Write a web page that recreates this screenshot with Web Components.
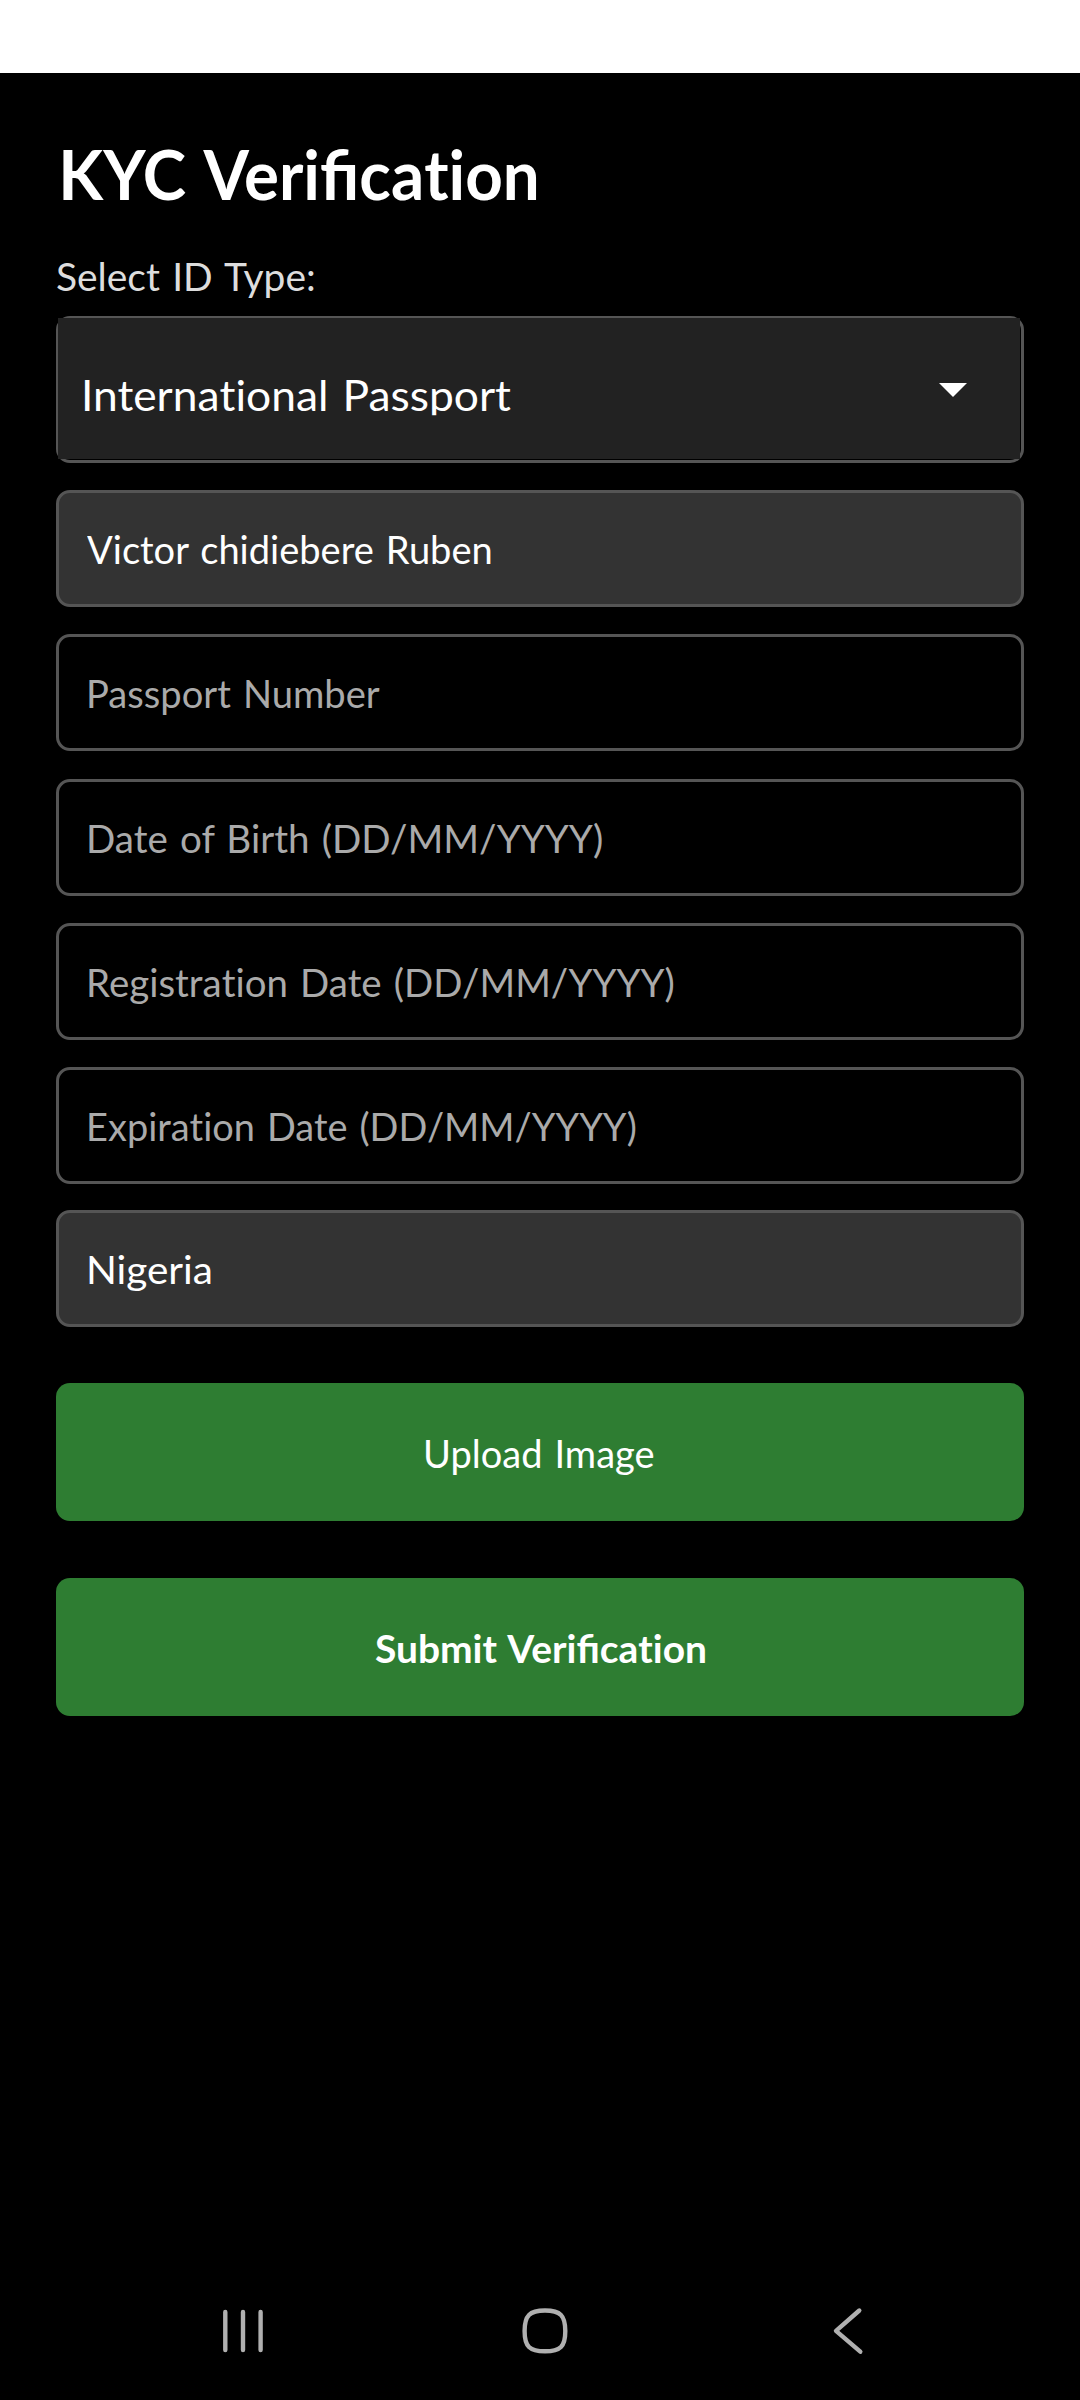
<!DOCTYPE html>
<html lang="en">
<head>
<meta charset="utf-8">
<title>KYC Verification</title>
<style>
html, body { margin: 0; background: #000; }
body { font-family: Lato, "Open Sans", sans-serif; color: #fff; }
fit-text b { font-weight: inherit; font-variant-ligatures: none; }
</style>
</head>
<body>
<kyc-screen>
  <kyc-heading><fit-text size="69" w="474" x="1.5" weight="700">KYC Verifica<b>ti</b>on</fit-text></kyc-heading>
  <kyc-label><fit-text size="39" w="257">Select ID Type:</fit-text></kyc-label>
  <kyc-select><fit-text size="43" w="426.5" x="1.5" clip="5">Interna<b>ti</b>onal Passport</fit-text></kyc-select>
  <kyc-field filled><fit-text size="39" w="404">Victor chidiebere Ruben</fit-text></kyc-field>
  <kyc-field><fit-text size="39" w="290.5" x="1.5">Passport Number</fit-text></kyc-field>
  <kyc-field style="margin-top:28px"><fit-text size="39" w="513" x="1.5">Date of Birth (DD/MM/YYYY)</fit-text></kyc-field>
  <kyc-field><fit-text size="39" w="584.5" x="1.5">Registra<b>ti</b>on Date (DD/MM/YYYY)</fit-text></kyc-field>
  <kyc-field><fit-text size="39" w="546.5" x="1.5">Expira<b>ti</b>on Date (DD/MM/YYYY)</fit-text></kyc-field>
  <kyc-field filled style="margin-top:26px"><fit-text size="39" w="121.5" x="1.5">Nigeria</fit-text></kyc-field>
  <kyc-button style="margin-top:56px"><fit-text size="39" w="228">Upload Image</fit-text></kyc-button>
  <kyc-button style="margin-top:57px"><fit-text size="39" w="330" weight="700">Submit Verifica<b>ti</b>on</fit-text></kyc-button>
  <nav-bar slot="nav"></nav-bar>
</kyc-screen>
<script>
const define = (name, html, ready) => customElements.define(name, class extends HTMLElement {
  constructor() {
    super();
    this.attachShadow({ mode: 'open' }).innerHTML = html;
  }
  connectedCallback() { if (ready) ready(this); }
});

const ctx = document.createElement('canvas').getContext('2d');

/* One line of text whose drawn glyphs span exactly the given width. */
define('fit-text', `<style>
  :host { display: block; flex: none; line-height: 1.2; white-space: nowrap; padding-top: 2px; word-spacing: .06em; }
  span { display: inline-block; transform-origin: 0 50%; }
</style><span><slot></slot></span>`, el => {
  const size = +el.getAttribute('size'), w = +el.getAttribute('w'), x = +el.getAttribute('x') || 0;
  const weight = el.getAttribute('weight') || '400';
  ctx.font = `${weight} ${size}px Lato, "Open Sans", sans-serif`;
  const m = ctx.measureText(el.textContent);
  const span = el.shadowRoot.querySelector('span');
  el.style.cssText += `;font-size:${size}px;font-weight:${weight};width:${w}px;margin-left:${x}px`;
  const ink = span.getBoundingClientRect().width + m.actualBoundingBoxLeft - (m.width - m.actualBoundingBoxRight);
  const s = w / ink;
  span.style.transform = `translateX(${m.actualBoundingBoxLeft * s}px) scaleX(${s})`;
  if (el.hasAttribute('clip')) el.style.clipPath = `inset(0 -4px ${el.getAttribute('clip')}px -4px)`;
});

define('kyc-screen', `<style>
  :host { display: flex; flex-direction: column; height: 2400px; background: #000; overflow: hidden; }
  .status { flex: none; height: 73px; background: #fff; }
  main { flex: 1; display: flex; flex-direction: column; padding: 58px 56px 0; }
</style><div class="status"></div><main><slot></slot></main><slot name="nav"></slot>`);

define('kyc-heading', `<style>
  :host { display: flex; align-items: center; height: 84px; padding-left: 5px; }
</style><slot></slot>`);

define('kyc-label', `<style>
  :host { display: flex; align-items: center; height: 46px; margin-top: 37px; padding-left: 1px; color: #ddd; }
</style><slot></slot>`);

define('kyc-select', `<style>
  :host { display: flex; box-sizing: border-box; height: 147px; margin-top: 18px;
    border: 3px solid #555; border-radius: 14px; }
  .inner { flex: 1; display: flex; align-items: center; justify-content: space-between;
    margin: -1px 1px 1px -1px; padding: 0 53px 0 24px; background: #222; }
  ::slotted(*) { margin-top: 10px; }
  svg { display: block; margin-top: 3px; }
</style><div class="inner"><slot></slot>
<svg width="28" height="14" viewBox="0 0 28 14"><path d="M0 0H28L14 14Z" fill="#fff"/></svg></div>`);

define('kyc-field', `<style>
  :host { display: flex; align-items: center; box-sizing: border-box; height: 117px; margin-top: 27px;
    padding-left: 28px; border: 3px solid #555; border-radius: 14px; color: #aaa; }
  :host([filled]) { background: #333; color: #fff; }
</style><slot></slot>`);

define('kyc-button', `<style>
  :host { display: flex; align-items: center; justify-content: center; height: 138px;
    border-radius: 14px; background: #2e7d32; }
</style><slot></slot>`);

define('nav-bar', `<style>
  :host { display: flex; flex: none; justify-content: space-between; height: 138px; padding: 0 212px 0 215px; }
  svg { display: block; fill: none; stroke: #b0b0b0; stroke-width: 4.4; stroke-linecap: round; stroke-linejoin: round; margin-top: 39px; }
</style>
<svg width="56" height="60" viewBox="215 2301 56 60"><path d="M225.3 2312V2350M243 2312V2350M260.6 2312V2350"/></svg>
<svg width="60" height="60" viewBox="515 2301 60 60"><path d="M545 2310.5C560.5 2310.5 565.3 2315.5 565.3 2331S560.5 2351.3 545 2351.3S524.6 2346.5 524.6 2331S529.5 2310.5 545 2310.5Z"/></svg>
<svg width="50" height="60" viewBox="818 2301 50 60"><path d="M859.3 2310.5L836 2330.8L860.3 2351.7"/></svg>`);
</script>
</body>
</html>
